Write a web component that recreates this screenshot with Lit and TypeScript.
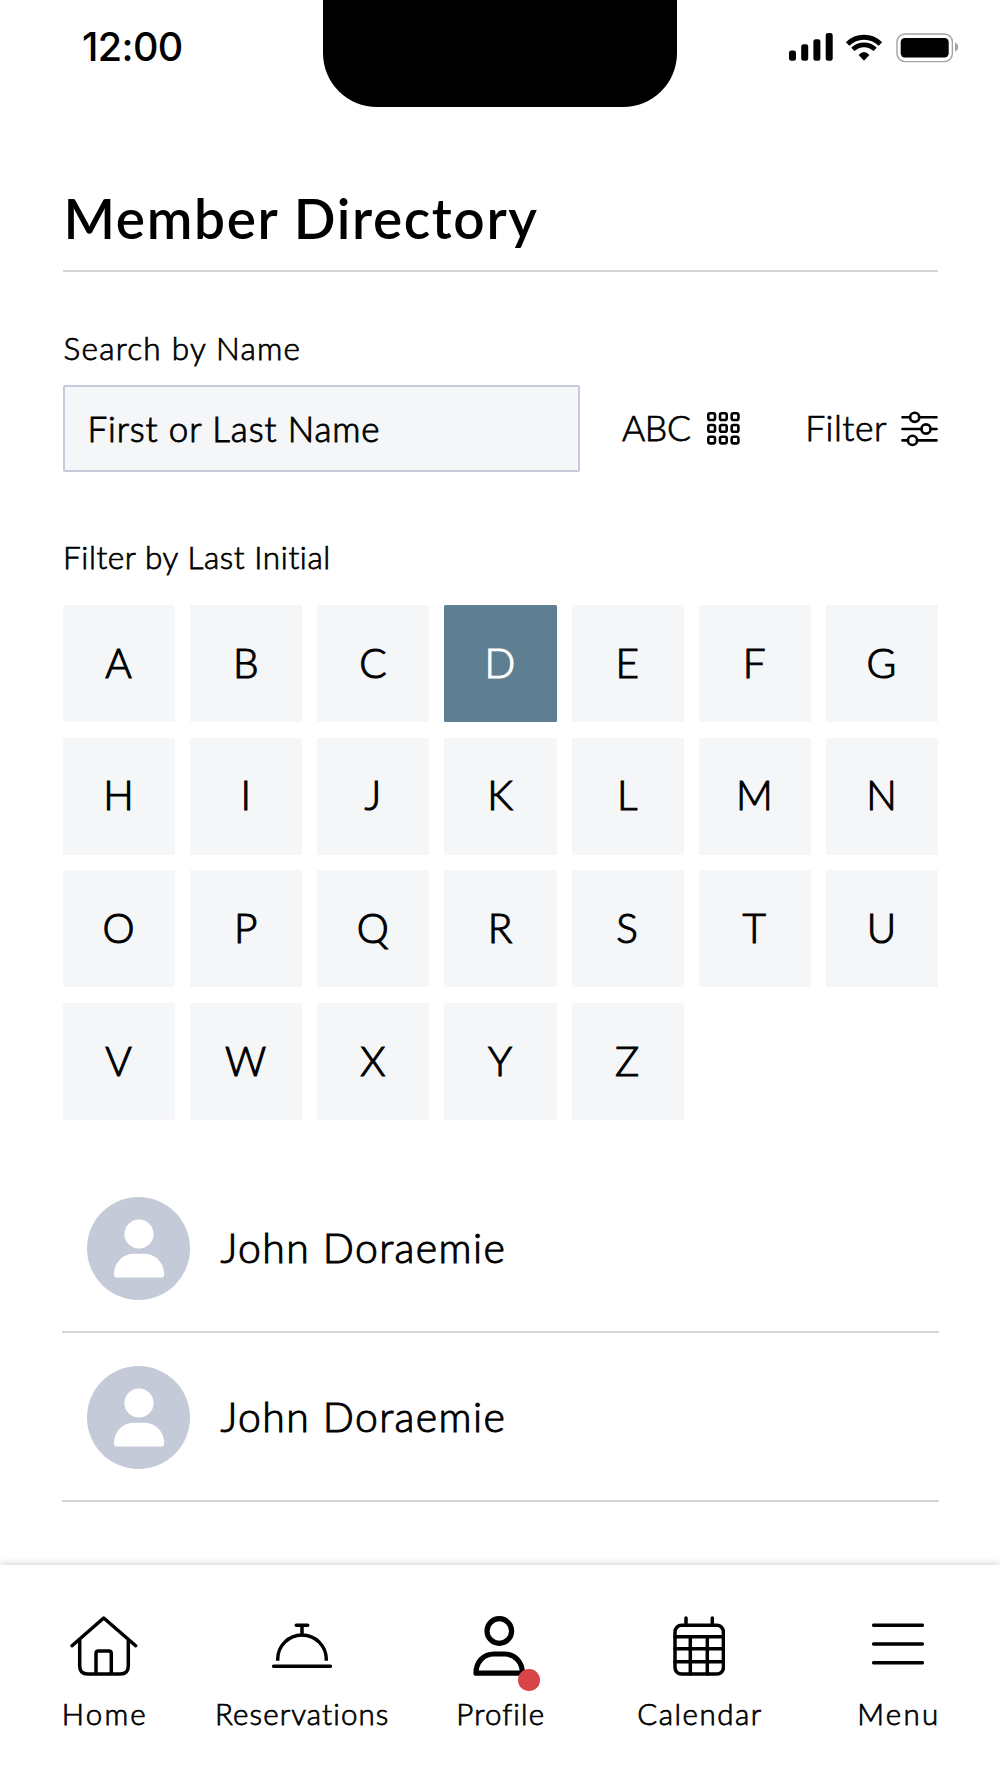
import { LitElement, html, css, svg, nothing } from "lit";
import { customElement, property, state } from "lit/decorators.js";
import { classMap } from "lit/directives/class-map.js";

const LETTERS = "ABCDEFGHIJKLMNOPQRSTUVWXYZ".split("");
const MEMBERS = ["John Doraemie", "John Doraemie"];

@customElement("status-bar")
class StatusBar extends LitElement {
  static styles = css`
    :host {
      display: grid;
      grid-template-columns: 323px 354px 1fr;
      height: 107px;
    }
    .time {
      padding-left: 82px;
      font: 500 39.5px/95px Inter, sans-serif;
      letter-spacing: -0.6px;
      -webkit-text-stroke: 0;
    }
    .notch {
      background: #000;
      border-radius: 0 0 54px 54px;
    }
    .signals {
      display: block;
      width: 170px;
      height: 30px;
      margin: 33px 0 0 112px;
    }
  `;
  render() {
    return html`
      <div class="time">12:00</div>
      <div class="notch"></div>
      <svg class="signals" viewBox="0 0 170 30">
        <rect x="0" y="17.4" width="7" height="10.4" rx="2.4" />
        <rect x="12.2" y="11.2" width="7" height="16.6" rx="2.4" />
        <rect x="24.4" y="6.2" width="7" height="21.6" rx="2.4" />
        <rect x="36.7" y="0" width="7" height="27.8" rx="2.4" />
        <g fill="none" stroke="#000">
          <path d="M58.6 11 A23.3 23.3 0 0 1 91.4 11" stroke-width="5" />
          <path d="M63.9 16.4 A15.7 15.7 0 0 1 86.1 16.4" stroke-width="4.7" />
        </g>
        <path d="M69.6 22 Q75 16 80.4 22 L75 27.7 Z" />
        <rect x="108" y="1" width="55.4" height="27.6" rx="8" fill="none" stroke="#a3a3a3" stroke-width="1.4" />
        <rect x="111.7" y="5" width="48" height="19.5" rx="4.2" />
        <path d="M166 9.2 Q169.2 11 169.2 14 Q169.2 17 166 18.8 Z" fill="#a3a3a3" />
      </svg>
    `;
  }
}

@customElement("search-row")
class SearchRow extends LitElement {
  static styles = css`
    :host {
      display: flex;
      align-items: center;
      height: 87px;
    }
    .field {
      box-sizing: border-box;
      width: 517px;
      height: 87px;
      padding: 0 0 2px 22.5px;
      border: 2px solid #c6cbd9;
      border-radius: 2px;
      background: #f5f6f8;
      color: #000;
      font: 300 35px/81px Lato, sans-serif;
      letter-spacing: 0.9px;
      -webkit-text-stroke: 0.9px #000;
    }
    .field::placeholder {
      color: #000;
      opacity: 1;
    }
    .tool {
      display: flex;
      align-items: center;
      font-size: 35.5px;
      line-height: 44px;
    }
    .tool span {
      padding-bottom: 2px;
    }
    .abc {
      margin-left: 42px;
      gap: 16px;
      letter-spacing: -0.4px;
    }
    .filter {
      margin-left: auto;
      gap: 14px;
      letter-spacing: 0.5px;
    }
    svg {
      display: block;
      fill: none;
      stroke: #000;
      stroke-width: 2.6;
      stroke-linecap: round;
    }
  `;
  render() {
    const cells = [1.3, 13, 24.7];
    return html`
      <input class="field" type="text" placeholder="First or Last Name" />
      <div class="tool abc">
        <span>ABC</span>
        <svg width="33" height="33" viewBox="0 0 33 33">
          ${cells.map((y) => cells.map((x) => svg`<rect x=${x} y=${y} width="6.7" height="6.7" rx="1.8" />`))}
        </svg>
      </div>
      <div class="tool filter">
        <span>Filter</span>
        <svg width="37" height="36" viewBox="0 0 37 36">
          <path d="M1.5 6.3H9M18 6.3H35.5M1.5 18H20.5M29.5 18H35.5M1.5 29.4H7M16 29.4H35.5" />
          <circle cx="13.7" cy="6.3" r="4.6" />
          <circle cx="25" cy="18" r="4.6" />
          <circle cx="11.5" cy="29.4" r="4.6" />
        </svg>
      </div>
    `;
  }
}

@customElement("letter-grid")
class LetterGrid extends LitElement {
  @state() selected = "D";
  static styles = css`
    :host {
      display: grid;
      grid-template-columns: repeat(7, 1fr);
      grid-auto-rows: 117px;
      gap: 15.8px 15px;
    }
    .tile {
      display: flex;
      align-items: center;
      justify-content: center;
      padding: 0 1px 1px 0;
      border: 0;
      border-radius: 1.5px;
      background: #f5f6f8;
      color: #000;
      font: 300 40.5px/1.2 Lato, sans-serif;
      -webkit-text-stroke: 1.1px currentColor;
    }
    .active {
      background: #5e7e91;
      color: #fff;
    }
  `;
  render() {
    return LETTERS.map(
      (l) => html`<button class=${classMap({ tile: true, active: l === this.selected })} @click=${() => (this.selected = l)}>${l}</button>`
    );
  }
}

@customElement("member-row")
class MemberRow extends LitElement {
  @property() name = "";
  static styles = css`
    :host {
      display: flex;
      align-items: center;
      gap: 30.5px;
      margin: 0 -1px;
      padding: 33px 0 31px 25px;
      border-bottom: 2px solid #d5d5d6;
    }
    svg {
      display: block;
    }
    .name {
      padding-bottom: 2px;
      font-size: 41px;
      line-height: 50px;
      letter-spacing: 1.38px;
      -webkit-text-stroke: 1px #000;
    }
  `;
  render() {
    return html`
      <svg width="103" height="103" viewBox="0 0 103 103">
        <circle cx="51.5" cy="51.5" r="51.5" fill="#c5cad9" />
        <circle cx="52" cy="37" r="14.6" fill="#fff" />
        <path
          d="M27 77.5C27 66 35.5 56.8 46.5 56.8H57.5C68.5 56.8 77.2 66 77.2 77.5Q77.2 80.6 74.2 80.6H30Q27 80.6 27 77.5Z"
          fill="#fff"
        />
      </svg>
      <div class="name">${this.name}</div>
    `;
  }
}

const NAV = [
  {
    label: "Home", kind: "home", width: 68,
    icon: svg`<path d="M2 29.7L33.7 2L65.7 29.7M9.7 24V50Q9.7 58 17.7 58H50.3Q58.3 58 58.3 50V24M26 58V37.5Q26 35 28.5 35H38.8Q41.3 35 41.3 37.5V58" />`,
  },
  {
    label: "Reservations", kind: "reservations", width: 60,
    icon: svg`<path d="M1.7 50.3H58.3M24.3 9.3H35.7M30 9.3V19" /><path stroke-linecap="butt" d="M5.7 44.8V43.3A24.3 24.3 0 0 1 54.3 43.3V44.8" />`,
  },
  {
    label: "Profile", kind: "profile", width: 56, badge: true,
    icon: svg`<g stroke-width="5.2"><circle cx="26.3" cy="15" r="12.3" /><path d="M3 57.2C3 46 10.5 38 21 38H31.4C42 38 49.4 46 49.4 57.2Z" /></g>`,
  },
  {
    label: "Calendar", kind: "calendar", width: 52,
    icon: svg`<rect x="2" y="9.3" width="48.4" height="48.8" rx="6.5" /><path d="M13 2V9M39.3 2V9M2 20.7H50.4M2 32.7H50.4M2 45.7H50.4M17.3 20.7V58M34.3 20.7V58" />`,
  },
  {
    label: "Menu", kind: "menu", width: 52,
    icon: svg`<path d="M1.7 9.3H50.3M1.7 28H50.3M1.7 46.7H50.3" />`,
  },
];

@customElement("nav-bar")
class NavBar extends LitElement {
  static styles = css`
    :host {
      display: grid;
      grid-template-columns: repeat(5, 1fr);
      box-sizing: border-box;
      height: 213.5px;
      padding: 51.5px 3px 0 4.5px;
      background: #fff;
      box-shadow: 0 -2px 6px rgba(0, 0, 0, 0.15);
    }
    .item {
      display: flex;
      flex-direction: column;
      align-items: center;
      gap: 19.5px;
    }
    .icon {
      position: relative;
    }
    svg {
      display: block;
      fill: none;
      stroke: #000;
      stroke-width: 3.5;
      stroke-linecap: round;
      stroke-linejoin: round;
    }
    .badge {
      position: absolute;
      left: 45.4px;
      top: 53.2px;
      width: 21.6px;
      height: 21.6px;
      border-radius: 50%;
      background: #d94448;
    }
    .label {
      font-size: 29.5px;
      line-height: 36px;
    }
    .home {
      letter-spacing: 2.2px;
      margin-right: -2.2px;
    }
    .reservations {
      letter-spacing: 1.1px;
    }
    .profile {
      letter-spacing: 1.1px;
      font-variant-ligatures: none;
    }
    .calendar {
      letter-spacing: 1.5px;
      margin-right: -1.4px;
    }
    .menu {
      letter-spacing: 2.3px;
      margin-right: -2.3px;
    }
  `;
  render() {
    return NAV.map(
      (n) => html`<div class="item">
        <div class="icon">
          <svg width=${n.width} height="60" viewBox="0 0 ${n.width} 60">${n.icon}</svg>
          ${n.badge ? html`<div class="badge"></div>` : nothing}
        </div>
        <div class="label ${n.kind}">${n.label}</div>
      </div>`
    );
  }
}

@customElement("app-root")
class AppRoot extends LitElement {
  static styles = css`
    :host {
      display: flex;
      flex-direction: column;
      height: 1778px;
      overflow: hidden;
      background: #fff;
      color: #000;
      font-family: Lato, sans-serif;
      font-weight: 300;
      -webkit-text-stroke: 0.75px #000;
    }
    .content {
      flex: 1;
      min-height: 0;
      padding: 78px 62px 0 63px;
    }
    .title {
      margin: 0;
      padding-bottom: 19px;
      border-bottom: 2px solid #d5d5d6;
      font-size: 55px;
      line-height: 66px;
      font-weight: 600;
      letter-spacing: 1.65px;
      text-indent: 0.5px;
      -webkit-text-stroke: 0;
    }
    .label {
      font-size: 31.5px;
      line-height: 40px;
    }
    .search {
      margin: 56px 0 17px;
      letter-spacing: 1.25px;
      text-indent: 0.6px;
    }
    .initial {
      margin: 65px 0 27.9px;
      letter-spacing: 0.6px;
      text-indent: 0;
    }
    .members {
      margin-top: 44px;
    }
  `;
  render() {
    return html`
      <status-bar></status-bar>
      <main class="content">
        <h1 class="title">Member Directory</h1>
        <div class="label search">Search by Name</div>
        <search-row></search-row>
        <div class="label initial">Filter by Last Initial</div>
        <letter-grid></letter-grid>
        <div class="members">${MEMBERS.map((m) => html`<member-row name=${m}></member-row>`)}</div>
      </main>
      <nav-bar></nav-bar>
    `;
  }
}
